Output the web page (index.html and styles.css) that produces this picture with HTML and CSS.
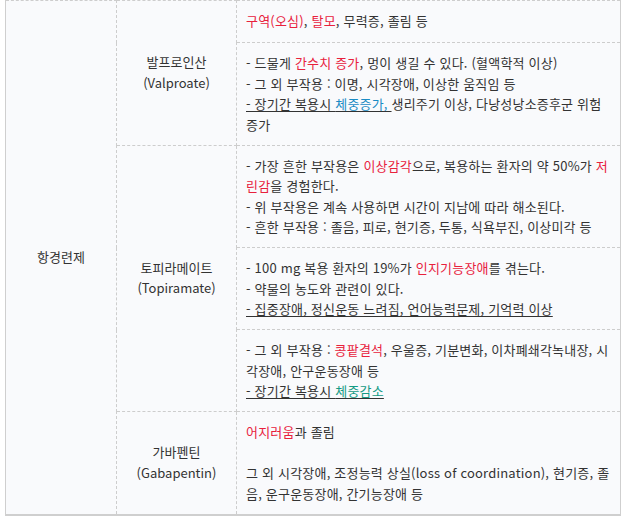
FILE: index.html
```html
<!DOCTYPE html>
<html lang="ko">
<head>
<meta charset="utf-8">
<link rel="stylesheet" href="styles.css">
</head>
<body>
<table class="tbl">
  <colgroup>
    <col class="c1"><col class="c2"><col class="c3">
  </colgroup>
  <tr class="r1">
    <td class="cat" rowspan="6">항경련제</td>
    <td class="drug" rowspan="2">발프로인산<br>(Valproate)</td>
    <td class="fx"><span class="red">구역(오심)</span>, <span class="red">탈모</span>, 무력증, 졸림 등</td>
  </tr>
  <tr class="r2">
    <td class="fx">- 드물게 <span class="red">간수치 증가</span>, 멍이 생길 수 있다. (혈액학적 이상)<br>- 그 외 부작용 : 이명, 시각장애, 이상한 움직임 등<br><u>- 장기간 복용시 <span class="blue">체중증가, </span></u>생리주기 이상, 다낭성낭소증후군 위험 증가</td>
  </tr>
  <tr class="r3">
    <td class="drug" rowspan="3">토피라메이트<br>(Topiramate)</td>
    <td class="fx">- 가장 흔한 부작용은 <span class="red">이상감각</span>으로, 복용하는 환자의 약 50%가 <span class="red">저린감</span>을 경험한다.<br>- 위 부작용은 계속 사용하면 시간이 지남에 따라 해소된다.<br>- 흔한 부작용 : 졸음, 피로, 현기증, 두통, 식욕부진, 이상미각 등</td>
  </tr>
  <tr class="r4">
    <td class="fx">- 100 mg 복용 환자의 19%가 <span class="red">인지기능장애</span>를 겪는다.<br>- 약물의 농도와 관련이 있다.<br><u>- 집중장애, 정신운동 느려짐, 언어능력문제, 기억력 이상</u></td>
  </tr>
  <tr class="r5">
    <td class="fx">- 그 외 부작용 : <span class="red">콩팥결석</span>, 우울증, 기분변화, 이차폐쇄각녹내장, 시각장애, 안구운동장애 등<br><u>- 장기간 복용시 <span class="green">체중감소</span></u></td>
  </tr>
  <tr class="r6">
    <td class="drug">가바펜틴<br>(Gabapentin)</td>
    <td class="fx"><span class="red">어지러움</span>과 졸림<br><br>그 외 시각장애, 조정능력 상실(loss of coordination), 현기증, 졸음, 운구운동장애, 간기능장애 등</td>
  </tr>
</table>
</body>
</html>
```
FILE: styles.css
```css
html, body {
  margin: 0;
  padding: 0;
  background: #ffffff;
}
body {
  padding: 0 6px 0 5px;
  font-family: "Noto Sans CJK KR", "Noto Sans", sans-serif;
  font-size: 13px;
  color: #333333;
}
.tbl {
  border-collapse: collapse;
  width: 616px;
  table-layout: fixed;
  border-top: 1px dashed #d6d6d6;
  border-left: 1px solid #cfcfcf;
  border-right: 1px solid #cfcfcf;
  border-bottom: 2px solid #cfcfcf;
  background: #f9fafc;
}
.c1 { width: 111px; }
.c2 { width: 120px; }
.c3 { width: auto; }
.tbl td {
  border: 1px dashed #cdcdcd;
  line-height: 20.5px;
  vertical-align: middle;
}
.cat, .drug {
  text-align: center;
  padding: 0 4px;
}
.fx {
  padding: 10px 8px 9.5px 9px;
  text-align: left;
  letter-spacing: 0.2px;
}
.r1 .fx { height: 21px; padding-top: 10px; padding-bottom: 10px; }
.red { color: #e8213c; }
.blue { color: #1a8bc4; }
.green { color: #159b85; }
u { text-underline-offset: 2px; }
```
